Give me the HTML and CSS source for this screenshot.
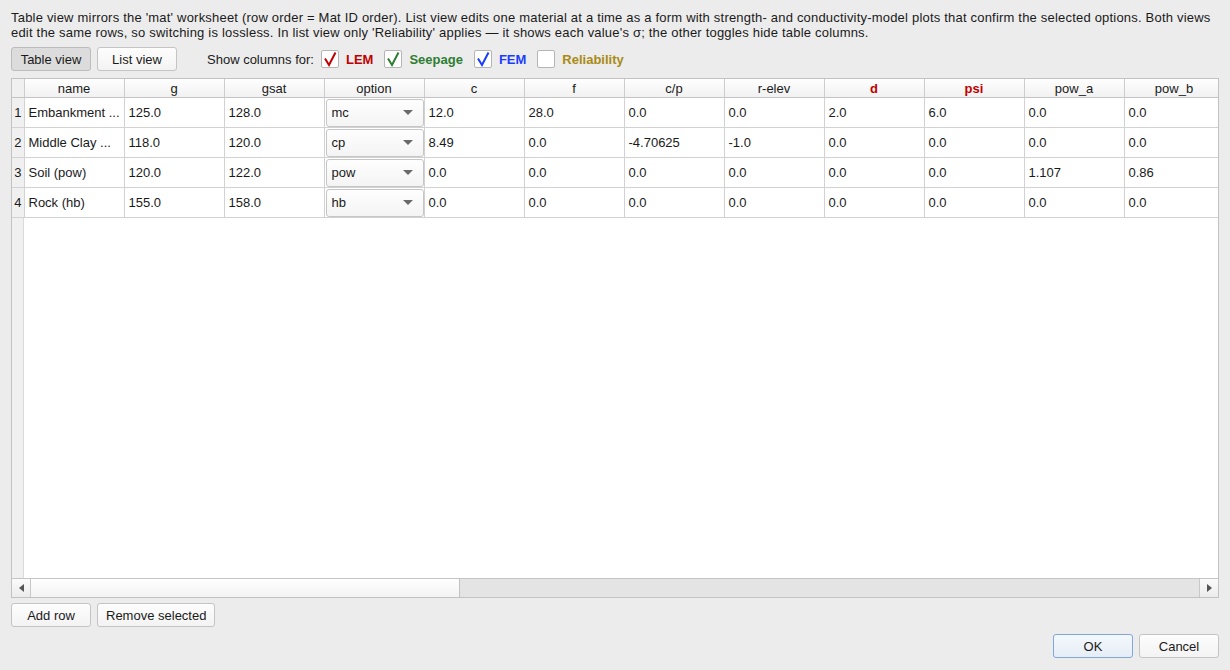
FILE: index.html
```html
<!DOCTYPE html>
<html>
<head>
    <title>Materials</title>
    <link rel="stylesheet" href="styles.css">
</head>
<body>
  <div class="dialog">
    <p class="intro">Table view mirrors the 'mat' worksheet (row order = Mat ID order). List view edits one material at a time as a form with strength- and conductivity-model plots that confirm the selected options. Both views edit the same rows, so switching is lossless. In list view only 'Reliability' applies — it shows each value's σ; the other toggles hide table columns.</p>

    <div class="toolbar">
      <button class="btn btn-pressed">Table view</button>
      <button class="btn">List view</button>
      <span class="show-label">Show columns for:</span>
      <label class="toggle"><span class="box"><svg width="16" height="16" viewBox="0 0 16 16"><path d="M3 7.5 L7 14 L13.5 1.5" fill="none" stroke="#c00000" stroke-width="2"/></svg></span><span class="tlabel lem">LEM</span></label>
      <label class="toggle"><span class="box"><svg width="16" height="16" viewBox="0 0 16 16"><path d="M3 7.5 L7 14 L13.5 1.5" fill="none" stroke="#2e7d32" stroke-width="2"/></svg></span><span class="tlabel seep">Seepage</span></label>
      <label class="toggle"><span class="box"><svg width="16" height="16" viewBox="0 0 16 16"><path d="M3 7.5 L7 14 L13.5 1.5" fill="none" stroke="#1a3cff" stroke-width="2"/></svg></span><span class="tlabel fem">FEM</span></label>
      <label class="toggle"><span class="box"></span><span class="tlabel rel">Reliability</span></label>
    </div>

    <div class="grid-box">
      <div class="grid-view">
        <table class="grid">
          <colgroup>
            <col class="c-stub">
            <col><col><col><col><col><col><col><col><col><col><col><col>
          </colgroup>
          <thead>
            <tr>
              <th class="stub"></th>
              <th>name</th><th>g</th><th>gsat</th><th>option</th><th>c</th><th>f</th>
              <th>c/p</th><th>r-elev</th><th class="hot">d</th><th class="hot">psi</th><th>pow_a</th><th>pow_b</th>
            </tr>
          </thead>
          <tbody>
            <tr>
              <td class="stub">1</td><td>Embankment ...</td><td>125.0</td><td>128.0</td>
              <td class="opt"><div class="combo">mc<span class="arrow"></span></div></td>
              <td>12.0</td><td>28.0</td><td>0.0</td><td>0.0</td><td>2.0</td><td>6.0</td><td>0.0</td><td>0.0</td>
            </tr>
            <tr>
              <td class="stub">2</td><td>Middle Clay ...</td><td>118.0</td><td>120.0</td>
              <td class="opt"><div class="combo">cp<span class="arrow"></span></div></td>
              <td>8.49</td><td>0.0</td><td>-4.70625</td><td>-1.0</td><td>0.0</td><td>0.0</td><td>0.0</td><td>0.0</td>
            </tr>
            <tr>
              <td class="stub">3</td><td>Soil (pow)</td><td>120.0</td><td>122.0</td>
              <td class="opt"><div class="combo">pow<span class="arrow"></span></div></td>
              <td>0.0</td><td>0.0</td><td>0.0</td><td>0.0</td><td>0.0</td><td>0.0</td><td>1.107</td><td>0.86</td>
            </tr>
            <tr>
              <td class="stub">4</td><td>Rock (hb)</td><td>155.0</td><td>158.0</td>
              <td class="opt"><div class="combo">hb<span class="arrow"></span></div></td>
              <td>0.0</td><td>0.0</td><td>0.0</td><td>0.0</td><td>0.0</td><td>0.0</td><td>0.0</td><td>0.0</td>
            </tr>
          </tbody>
        </table>
      </div>
      <div class="hscroll">
        <div class="sb-btn"><span class="tri-left"></span></div>
        <div class="sb-track"><div class="sb-thumb"></div></div>
        <div class="sb-btn"><span class="tri-right"></span></div>
      </div>
    </div>

    <div class="row-actions">
      <button class="btn">Add row</button>
      <button class="btn">Remove selected</button>
    </div>

    <div class="dialog-actions">
      <button class="btn btn-default">OK</button>
      <button class="btn">Cancel</button>
    </div>
  </div>
</body>
</html>
```

FILE: styles.css
```css
body {
  margin: 0;
  background-color: #ececec;
  font-family: "Liberation Sans", Arial, sans-serif;
  font-size: 13px;
  color: #1a1a1a;
}

.dialog {
  box-sizing: border-box;
  height: 670px;
  padding: 10px 11px 12px 11px;
  display: flex;
  flex-direction: column;
}

.intro {
  margin: 0;
  line-height: 15px;
  letter-spacing: 0.2px;
}

.toolbar {
  margin-top: 7px;
  height: 24px;
  display: flex;
  align-items: center;
}

.btn {
  height: 24px;
  box-sizing: border-box;
  padding: 0 8px;
  min-width: 80px;
  border: 1px solid #c4c4c4;
  border-radius: 3px;
  background: linear-gradient(#fdfdfd, #f3f3f3);
  font-family: inherit;
  font-size: 13px;
  color: #1a1a1a;
}

.btn + .btn {
  margin-left: 6px;
}

.btn-pressed {
  background: #dcdcdc;
  border-color: #bcbcbc;
}

.btn-default {
  border-color: #7fa9de;
  background: linear-gradient(#f4f8fd, #e7edf5);
}

.show-label {
  margin-left: 30px;
  margin-right: 7px;
}

.toggle {
  display: flex;
  align-items: center;
  margin-right: 11px;
}

.box {
  width: 18px;
  height: 18px;
  box-sizing: border-box;
  border: 1px solid #b5b5b5;
  border-radius: 2px;
  background: #fff;
  display: flex;
  align-items: center;
  justify-content: center;
}

.tlabel {
  margin-left: 7px;
  font-weight: bold;
}

.lem { color: #c00000; }
.seep { color: #2e7d32; }
.fem { color: #1a3cff; }
.rel { color: #a88a14; }

.grid-box {
  margin-top: 7px;
  height: 520px;
  box-sizing: border-box;
  border: 1px solid #c2c2c2;
  display: flex;
  flex-direction: column;
}

.grid-view {
  flex: 1;
  overflow: hidden;
  background: linear-gradient(to right, #f0f0f0 11px, #dadada 11px 12px, #fff 12px);
}

.grid {
  border-collapse: collapse;
  table-layout: fixed;
  width: 1212px;
}

.grid col {
  width: 100px;
}

.grid col.c-stub {
  width: 12px;
}

.grid th {
  height: 18px;
  padding: 0;
  font-weight: normal;
  text-align: center;
  background: linear-gradient(#fefefe, #f1f1f1);
  border-right: 1px solid #cdcdcd;
  border-bottom: 1px solid #c4c4c4;
}

.grid th.hot {
  color: #c00000;
  font-weight: bold;
}

.grid td {
  height: 29px;
  padding: 0 4px;
  white-space: nowrap;
  overflow: hidden;
  background: #fff;
  border-right: 1px solid #d2d2d2;
  border-bottom: 1px solid #d2d2d2;
}

.grid .stub {
  padding: 0;
  text-align: center;
  background: #f0f0f0;
}

.grid td.opt {
  padding: 0;
}

.combo {
  margin: 0 0 0 1px;
  height: 28px;
  box-sizing: border-box;
  border: 1px solid #c6c6c6;
  border-radius: 3px;
  background: linear-gradient(#fefefe, #f4f4f4);
  display: flex;
  align-items: center;
  justify-content: space-between;
  padding: 0 10px 0 5px;
}

.arrow {
  width: 0;
  height: 0;
  border-left: 5px solid transparent;
  border-right: 5px solid transparent;
  border-top: 5px solid #6a6a6a;
}

.hscroll {
  height: 18px;
  display: flex;
  border-top: 1px solid #c4c4c4;
  background: #e4e4e4;
}

.sb-btn {
  width: 18px;
  display: flex;
  align-items: center;
  justify-content: center;
  background: linear-gradient(#fbfbfb, #ececec);
  border-right: 1px solid #c8c8c8;
}

.sb-btn:last-child {
  border-right: 0;
  border-left: 1px solid #c8c8c8;
}

.tri-left {
  border-top: 4px solid transparent;
  border-bottom: 4px solid transparent;
  border-right: 5px solid #555;
}

.tri-right {
  border-top: 4px solid transparent;
  border-bottom: 4px solid transparent;
  border-left: 5px solid #555;
}

.sb-track {
  flex: 1;
}

.sb-thumb {
  width: 429px;
  height: 100%;
  box-sizing: border-box;
  border-right: 1px solid #c2c2c2;
  background: linear-gradient(#fefefe, #f3f3f3);
}

.row-actions {
  margin-top: 5px;
  display: flex;
}

.dialog-actions {
  margin-top: 7px;
  display: flex;
  justify-content: flex-end;
}
```
